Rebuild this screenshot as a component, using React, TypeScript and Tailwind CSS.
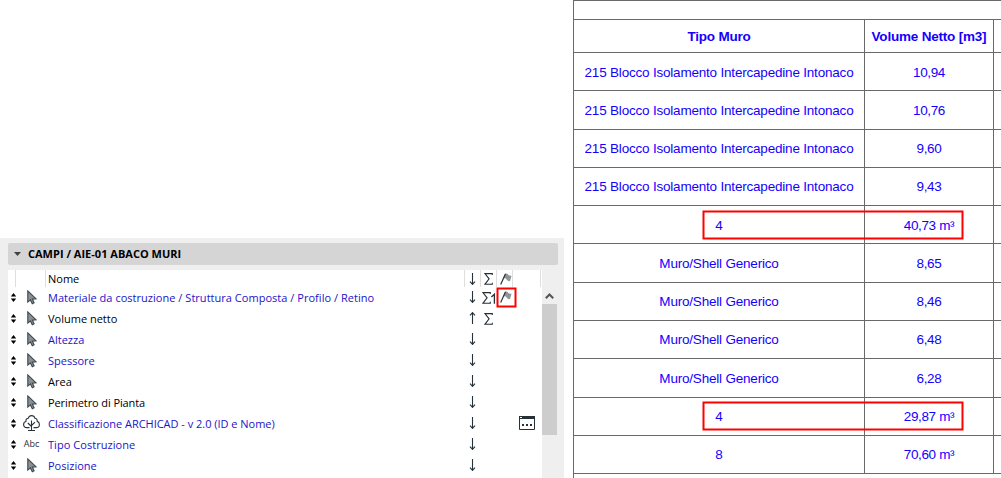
import type { FC } from 'react';
import clsx from 'clsx';

type IconKind = 'cursor' | 'tree' | 'text';

interface Field {
  name: string;
  icon: IconKind;
  link?: boolean;
  up?: boolean;
  sum?: string;
  flag?: boolean;
  dialog?: boolean;
  tracking?: string;
}

const FIELDS: Field[] = [
  { name: 'Materiale da costruzione / Struttura Composta / Profilo / Retino', icon: 'cursor', link: true, sum: '1', flag: true, tracking: 'tracking-[0.03px]' },
  { name: 'Volume netto', icon: 'cursor', up: true, sum: '' },
  { name: 'Altezza', icon: 'cursor', link: true },
  { name: 'Spessore', icon: 'cursor', link: true },
  { name: 'Area', icon: 'cursor' },
  { name: 'Perimetro di Pianta', icon: 'cursor', tracking: 'tracking-[-0.1px]' },
  { name: 'Classificazione ARCHICAD - v 2.0 (ID e Nome)', icon: 'tree', link: true, dialog: true, tracking: 'tracking-[-0.02px]' },
  { name: 'Tipo Costruzione', icon: 'text', link: true, tracking: 'tracking-[0.05px]' },
  { name: 'Posizione', icon: 'cursor', link: true },
];

interface Wall {
  type: string;
  volume: string;
  size: string;
  box?: string;
}

const WALLS: Wall[] = [
  { type: '215 Blocco Isolamento Intercapedine Intonaco', volume: '10,94', size: 'h-[38px] leading-[39px]' },
  { type: '215 Blocco Isolamento Intercapedine Intonaco', volume: '10,76', size: 'h-[39px] leading-[39px]' },
  { type: '215 Blocco Isolamento Intercapedine Intonaco', volume: '9,60', size: 'h-[38px] leading-[37px]' },
  { type: '215 Blocco Isolamento Intercapedine Intonaco', volume: '9,43', size: 'h-[38px] leading-[37px]' },
  { type: '4', volume: '40,73 m³', size: 'h-[38px] leading-[39px]', box: 'top-[4px] left-[128px]' },
  { type: 'Muro/Shell Generico', volume: '8,65', size: 'h-[39px] leading-[39px]' },
  { type: 'Muro/Shell Generico', volume: '8,46', size: 'h-[38px] leading-[37px]' },
  { type: 'Muro/Shell Generico', volume: '6,48', size: 'h-[38px] leading-[37px]' },
  { type: 'Muro/Shell Generico', volume: '6,28', size: 'h-[39px] leading-[39px]' },
  { type: '4', volume: '29,87 m³', size: 'h-[38px] leading-[37px]', box: 'top-[3px] left-[128px]' },
  { type: '8', volume: '70,60 m³', size: 'h-[38px] leading-[37px]' },
];

const SortHandle: FC = () => (
  <svg width="6" height="9" viewBox="0 0 6 9" className="ml-[3px] shrink-0" fill="#000">
    <path d="M2.5 0L5.2 3.6H-.2zM2.5 9L5.2 5.4H-.2z" />
  </svg>
);

const CursorIcon: FC = () => (
  <svg width="10" height="15" viewBox="0 0 10 15">
    <path d="M.8.9v11.2l2.6-2.2 1.9 3.8 1.8-.9-1.8-3.7 3.8-.3z" fill="#8a9094" stroke="#3d474d" strokeWidth="1.1" />
  </svg>
);

const TreeIcon: FC = () => (
  <svg width="17" height="17" viewBox="0 0 17 17" fill="none" stroke="#263238" strokeWidth="1.1">
    <path d="M8.5 15.5V5.5M8.5 11.5L4.8 8M8.5 10.5L12 7.2M5 15.5h7" />
    <path d="M6.5 12.6H4C1.8 12.6.6 11.2.6 9.5c0-1.6 1-2.7 2.3-3C2.7 4.6 3.8 3.3 5.3 3.2 5.8 1.5 7 .6 8.6.6c1.7 0 2.9 1 3.3 2.6 1.6.1 2.5 1.5 2.3 3.2 1.3.4 2.2 1.5 2.2 3 0 1.8-1.2 3.2-3.3 3.2h-2.6" />
  </svg>
);

const Arrow: FC<{ up?: boolean }> = ({ up }) => (
  <svg width="7" height="12" viewBox="0 0 7 12" className={clsx(up && 'rotate-180')} fill="none" stroke="#263238">
    <path d="M3.5 0v11.5" strokeWidth="1.1" />
    <path d="M1 8.7l2.5 2.6L6 8.7" strokeWidth="1.2" />
  </svg>
);

const Sigma: FC<{ one?: boolean }> = ({ one }) => (
  <svg width={one ? 14 : 9} height="12" viewBox={one ? '0 0 14 12' : '0 0 9 12'} fill="none" stroke="#263238" strokeWidth="1.1">
    <path d="M8.3 2V.6H.9l4.2 5.2-4.2 5.5h7.4V9.8" />
    {one && <path d="M9.4 5l3-2.7v9.4" strokeWidth="1.3" />}
  </svg>
);

const FlagIcon: FC = () => (
  <svg width="12" height="12" viewBox="0 0 12 12">
    <path d="M5.5.8Q7 0 8 1.5T11.6 2.8L10 8Q8 8.6 6.8 6.7T3.5 5.5z" fill="#8f9599" />
    <path d="M5.5.8L.7 11.5" fill="none" stroke="#263238" strokeWidth="1.2" />
  </svg>
);

const DialogIcon: FC = () => (
  <svg width="16" height="14" viewBox="0 0 16 14" className="mb-px">
    <path d="M.5.5h15v13H.5z" fill="#fff" stroke="#263238" />
    <path d="M0 0h16v3H0zM3 8h2v2H3zM7 8h2v2H7zM11 8h2v2h-2z" fill="#263238" />
    <path d="M1 1h2v1H1z" fill="#fff" />
  </svg>
);

const Highlight: FC<{ width: number; height: number; className: string }> = ({ width, height, className }) => (
  <svg width={width} height={height} className={clsx('absolute pointer-events-none', className)}>
    <rect x="1.5" y="1.5" width={width - 3} height={height - 3} fill="none" stroke="#ff0000" strokeWidth="2" />
  </svg>
);

const FieldIcon: FC<{ kind: IconKind }> = ({ kind }) => {
  if (kind === 'tree') return <TreeIcon />;
  if (kind === 'text') return <span className="-mt-[2px] text-[9px] text-[#263238]">Abc</span>;
  return <CursorIcon />;
};

const FieldRow: FC<{ field: Field }> = ({ field }) => (
  <div className="flex h-[21px] items-center">
    <SortHandle />
    <div className="ml-[3px] flex w-[23px] shrink-0 justify-center">
      <FieldIcon kind={field.icon} />
    </div>
    <span
      className={clsx(
        'ml-[5px] w-[416px] shrink-0 whitespace-nowrap leading-[20px]',
        field.link ? 'text-[#1c12c8]' : 'text-black',
        field.tracking,
      )}
    >
      {field.name}
    </span>
    <div className="mb-px flex w-[17px] shrink-0 justify-center">
      <Arrow up={field.up} />
    </div>
    <div className="mt-px flex w-[16px] shrink-0 pl-[3px]">
      {field.sum !== undefined && (
        <div className={clsx('w-[14px] shrink-0', field.sum && '-ml-[2px]')}>
          <Sigma one={field.sum === '1'} />
        </div>
      )}
    </div>
    <div className="relative mb-px flex w-[22px] shrink-0 pl-[3px]">
      {field.flag && (
        <>
          <FlagIcon />
          <Highlight width={21} height={21} className="-top-[4px] -left-px" />
        </>
      )}
    </div>
    {field.dialog && <DialogIcon />}
  </div>
);

const FieldsPanel: FC = () => (
  <section className="mt-[238px] h-[240px] w-[564px] shrink-0 bg-[#efefef] pt-[5px] pl-[8px] font-['Open_Sans','Noto_Sans',sans-serif] text-[11px]">
    <header className="flex h-[22px] w-[550px] items-center rounded-[2px] bg-[#d5d5d5] pl-[6px]">
      <svg width="7" height="4" viewBox="0 0 7 4" fill="#404040">
        <path d="M0 0h7L3.5 4z" />
      </svg>
      <h2 className="ml-[7px] text-[11px] font-bold tracking-[0.01px] text-black">CAMPI / AIE-01 ABACO MURI</h2>
    </header>

    <div className="mt-[5px] flex h-[208px]">
      <div className="w-[534px] overflow-hidden bg-white">
        <div className="flex h-[17px] items-center">
          <div className="h-full w-[8px] border-r border-[#dedede]" />
          <div className="h-full w-[30px] border-r border-[#dedede]" />
          <span className="w-[418px] pt-[2px] pl-[2px]">Nome</span>
          <div className="flex h-full w-[17px] items-center justify-center border-x border-[#dedede]">
            <Arrow />
          </div>
          <div className="flex h-full w-[16px] items-center border-r border-[#dedede] pl-[3px]">
            <Sigma />
          </div>
          <div className="flex h-full w-[16px] items-center border-r border-[#dedede] pl-[3px]">
            <FlagIcon />
          </div>
          <div className="h-full w-[28px] border-r border-[#dedede]" />
        </div>
        {FIELDS.map((field) => (
          <FieldRow key={field.name} field={field} />
        ))}
      </div>

      <div className="flex w-[15px] flex-col items-center pt-[23px]">
        <svg width="9" height="6" viewBox="0 0 9 6" fill="none" stroke="#555" strokeWidth="2">
          <path d="M.8 5.2L4.5 1.5l3.7 3.7" />
        </svg>
        <div className="mt-[5px] h-[131px] w-full bg-[#cdcdcd]" />
      </div>
    </div>
  </section>
);

const ScheduleTable: FC = () => (
  <section className="ml-[9px] w-[428px] shrink-0 border-t border-l border-[#696969] font-['Liberation_Sans',Arial,sans-serif] text-[13.5px] text-[#1400ff]">
    <div className="h-[19px] border-b border-[#696969]" />
    <div className="flex h-[33px] text-center font-bold leading-[33px] tracking-[-0.2px]">
      <div className="w-[291px] border-r border-b border-[#696969]">Tipo Muro</div>
      <div className="w-[129px] whitespace-nowrap border-r border-b border-[#696969]">Volume Netto [m3]</div>
      <div className="flex-1 border-b border-[#696969]" />
    </div>
    {WALLS.map((wall, i) => (
      <div key={i} className={clsx('relative flex text-center', wall.size)}>
        <div className="w-[291px] whitespace-nowrap border-r border-b border-[#696969] tracking-[-0.2px]">{wall.type}</div>
        <div className="w-[129px] border-r border-b border-[#696969] tracking-[-0.35px]">{wall.volume}</div>
        <div className="flex-1 border-b border-[#696969]" />
        {wall.box && <Highlight width={262} height={30} className={wall.box} />}
      </div>
    ))}
  </section>
);

const App: FC = () => (
  <main className="flex h-[478px] w-[1001px] overflow-hidden bg-white">
    <FieldsPanel />
    <ScheduleTable />
  </main>
);

export default App;
